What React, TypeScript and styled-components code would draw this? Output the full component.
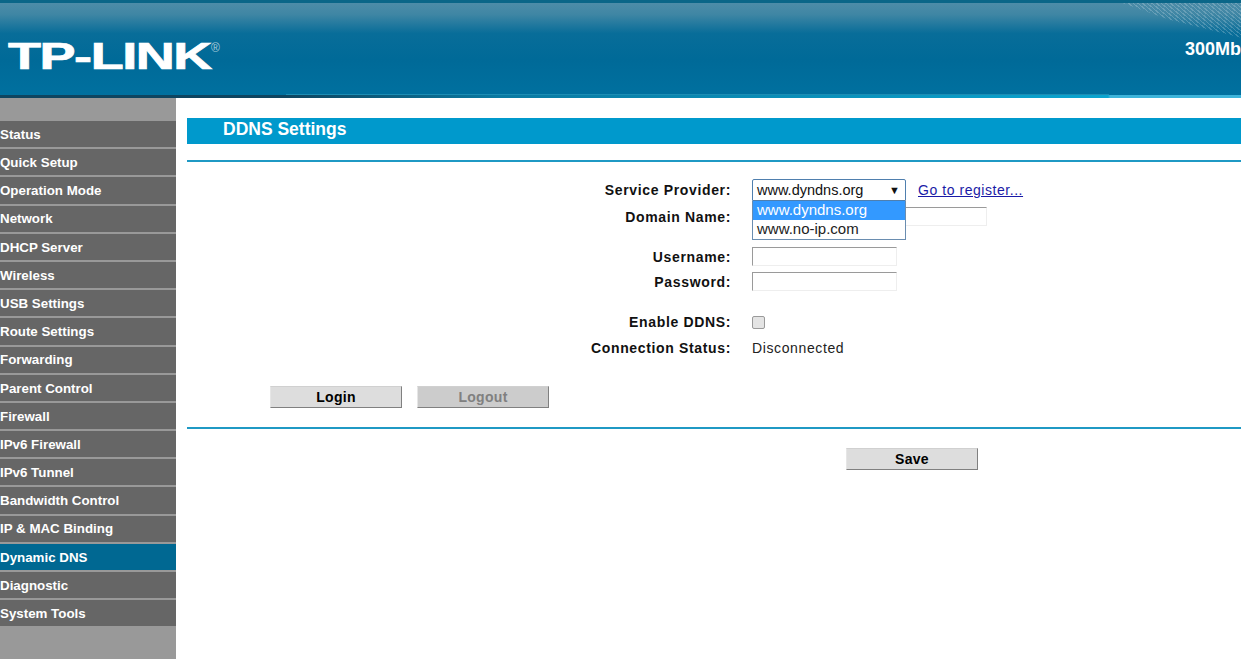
import React from "react";
import styled, { createGlobalStyle } from "styled-components";

const Global = createGlobalStyle`
  html, body { margin: 0; padding: 0; height: 100%; overflow: hidden; background: #fff; }
  body { font-family: "Liberation Sans", Arial, sans-serif; }
`;

const Page = styled.div`
  width: 1241px;
  height: 659px;
  display: flex;
  flex-direction: column;
  overflow: hidden;
`;

const Header = styled.header`
  position: relative;
  flex: none;
  height: 98px;
  box-sizing: border-box;
  display: flex;
  justify-content: space-between;
  overflow: hidden;
  border-top: 3px solid #0a6688;
  background: linear-gradient(180deg, #4d8ca8 0%, #3f86a4 12%, #086d99 32%, #006a98 60%, #0071a0 100%);
`;

const Stripes = styled.div`
  position: absolute;
  top: -3px;
  right: 0;
  width: 130px;
  height: 44px;
  clip-path: polygon(0 0, 100% 0, 100% 86%, 45% 45%, 8% 6%);
  background: repeating-linear-gradient(40deg, rgba(255,255,255,.2) 0 1px, rgba(255,255,255,0) 1px 3px);
`;

const BottomEdge = styled.div`
  position: absolute;
  left: 0;
  right: 0;
  bottom: 0;
  height: 3px;
  background: linear-gradient(90deg, #0e4560 0, #0e4560 285px, #0a7aa2 500px, #0aa4cf 1108px, #3db4da 1110px, #3db4da 100%);
`;

const EdgeHighlight = styled.div`
  position: absolute;
  left: 286px;
  width: 823px;
  bottom: 3px;
  height: 1px;
  background: #1c8db4;
`;

const LogoBox = styled.div`
  padding: 34px 0 0 8px;
  display: flex;
  align-items: flex-start;
`;

const LogoText = styled.div`
  color: #fff;
  font-weight: 700;
  font-size: 37px;
  line-height: 40px;
  letter-spacing: -1px;
  white-space: nowrap;
  -webkit-text-stroke: 0.7px #fff;
  transform: scaleX(1.46);
  transform-origin: left top;
`;

const Registered = styled.span`
  position: absolute;
  left: 211px;
  top: 39px;
  color: #a9cbdb;
  font-size: 12px;
  line-height: 12px;
`;

const Model = styled.div`
  padding-top: 36px;
  color: #fff;
  font-weight: 700;
  font-size: 18px;
  line-height: 20px;
  white-space: nowrap;
`;

const Body = styled.div`
  flex: 1;
  display: flex;
  min-height: 0;
`;

const Sidebar = styled.nav`
  flex: none;
  width: 176px;
  background: #999;
  padding-top: 23px;
  box-sizing: border-box;
  display: flex;
  flex-direction: column;
  gap: 2px;
`;

const MenuItem = styled.a<{ $active?: boolean }>`
  display: flex;
  align-items: center;
  box-sizing: border-box;
  height: 26.2px;
  padding-top: 0.5px;
  color: #fff;
  background: ${(p) => (p.$active ? "#006892" : "#666")};
  font-weight: 700;
  font-size: 13.33px;
  white-space: nowrap;
`;

const Main = styled.main`
  flex: 1;
  min-width: 0;
  padding: 20px 0 0 11px;
`;

const TitleBar = styled.h1`
  margin: 0;
  height: 26px;
  background: #0099cc;
  color: #fff;
  font-size: 17.5px;
  font-weight: 700;
  line-height: 22px;
  padding-left: 36px;
`;

const Rule = styled.hr<{ $top: number }>`
  margin: ${(p) => p.$top}px 0 0;
  border: 0;
  height: 2px;
  background: #1f99c4;
`;

const Form = styled.form`
  padding-top: 17px;
  display: flex;
  flex-direction: column;
`;

const Row = styled.div<{ $gap?: number }>`
  position: relative;
  display: grid;
  grid-template-columns: 544px 1fr;
  column-gap: 21px;
  align-items: center;
  height: 22px;
  margin-top: ${(p) => p.$gap ?? 0}px;
`;

const Label = styled.label`
  text-align: right;
  font-weight: 700;
  font-size: 14px;
  letter-spacing: 0.65px;
  color: #111;
  white-space: nowrap;
`;

const Value = styled.div`
  display: flex;
  align-items: center;
  gap: 12px;
  font-size: 14px;
  letter-spacing: 0.62px;
  color: #222;
`;

const SelectBox = styled.div`
  box-sizing: border-box;
  width: 154px;
  height: 22px;
  border: 1px solid #4f7fae;
  border-radius: 2px 2px 0 0;
  display: flex;
  align-items: center;
  justify-content: space-between;
  padding: 0 5px 0 4px;
  font-size: 14.5px;
  letter-spacing: 0;
  color: #111;
`;

const Arrow = styled.span`
  font-size: 11px;
  color: #111;
`;

const RegisterLink = styled.a`
  color: #1a1aa6;
  text-decoration: underline;
  font-size: 14px;
  letter-spacing: 0.55px;
`;

const Options = styled.ul`
  position: absolute;
  z-index: 2;
  left: 565px;
  top: 22px;
  box-sizing: border-box;
  width: 154px;
  margin: 0;
  padding: 0;
  list-style: none;
  background: #fff;
  border: 1px solid #6a8db0;
  border-top: 0;
`;

const Option = styled.li<{ $selected?: boolean }>`
  height: 19px;
  line-height: 18px;
  padding-left: 4px;
  font-size: 15px;
  color: ${(p) => (p.$selected ? "#fff" : "#222")};
  background: ${(p) => (p.$selected ? "#3399ff" : "#fff")};
`;

const TextField = styled.input<{ $width: number }>`
  box-sizing: border-box;
  width: ${(p) => p.$width}px;
  height: 19px;
  padding: 0;
  margin-bottom: 1px;
  background: #fff;
  border: 1px solid #eee;
  border-top-color: #9a9a9a;
  border-left-color: #9a9a9a;
  outline: none;
`;

const Check = styled.input`
  appearance: none;
  box-sizing: border-box;
  width: 13px;
  height: 13px;
  margin: 0;
  border: 1px solid #9a9a9a;
  border-radius: 2px;
  background: #e4e4e4;
`;

const ButtonRow = styled.div<{ $left: number; $top: number }>`
  display: flex;
  gap: 15px;
  padding-left: ${(p) => p.$left}px;
  margin-top: ${(p) => p.$top}px;
`;

const Button = styled.button<{ $off?: boolean }>`
  box-sizing: border-box;
  width: 132px;
  height: 22px;
  padding: 0;
  border: 0;
  border-top: 1px solid #d0d0d0;
  border-left: 1px solid #e6e6e6;
  border-right: 1px solid #808080;
  border-bottom: 1px solid #808080;
  background: ${(p) => (p.$off ? "#cccccc" : "#dddddd")};
  color: ${(p) => (p.$off ? "#808080" : "#000")};
  font-family: "Liberation Sans", Arial, sans-serif;
  font-size: 14px;
  font-weight: 700;
  letter-spacing: 0.3px;
`;

const menu = [
  "Status", "Quick Setup", "Operation Mode", "Network", "DHCP Server", "Wireless",
  "USB Settings", "Route Settings", "Forwarding", "Parent Control", "Firewall",
  "IPv6 Firewall", "IPv6 Tunnel", "Bandwidth Control", "IP & MAC Binding",
  "Dynamic DNS", "Diagnostic", "System Tools",
];

export default function App() {
  return (
    <Page>
      <Global />
      <Header>
        <Stripes />
        <LogoBox>
          <LogoText>TP-LINK</LogoText>
        </LogoBox>
        <Registered>®</Registered>
        <Model>300Mb</Model>
        <EdgeHighlight />
        <BottomEdge />
      </Header>
      <Body>
        <Sidebar>
          {menu.map((m) => (
            <MenuItem key={m} $active={m === "Dynamic DNS"}>{m}</MenuItem>
          ))}
        </Sidebar>
        <Main>
          <TitleBar>DDNS Settings</TitleBar>
          <Rule $top={16} />
          <Form>
            <Row>
              <Label>Service Provider:</Label>
              <Value>
                <SelectBox>
                  www.dyndns.org
                  <Arrow>▼</Arrow>
                </SelectBox>
                <RegisterLink href="#">Go to register...</RegisterLink>
              </Value>
              <Options>
                <Option $selected>www.dyndns.org</Option>
                <Option>www.no-ip.com</Option>
              </Options>
            </Row>
            <Row $gap={5}>
              <Label>Domain Name:</Label>
              <Value><TextField $width={235} /></Value>
            </Row>
            <Row $gap={18}>
              <Label>Username:</Label>
              <Value><TextField $width={145} /></Value>
            </Row>
            <Row $gap={3}>
              <Label>Password:</Label>
              <Value><TextField $width={145} type="password" /></Value>
            </Row>
            <Row $gap={18}>
              <Label>Enable DDNS:</Label>
              <Value><Check type="checkbox" /></Value>
            </Row>
            <Row $gap={4}>
              <Label>Connection Status:</Label>
              <Value>Disconnected</Value>
            </Row>
            <ButtonRow $left={83} $top={27}>
              <Button type="button">Login</Button>
              <Button type="button" $off disabled>Logout</Button>
            </ButtonRow>
          </Form>
          <Rule $top={19} />
          <ButtonRow $left={659} $top={19}>
            <Button type="button">Save</Button>
          </ButtonRow>
        </Main>
      </Body>
    </Page>
  );
}
